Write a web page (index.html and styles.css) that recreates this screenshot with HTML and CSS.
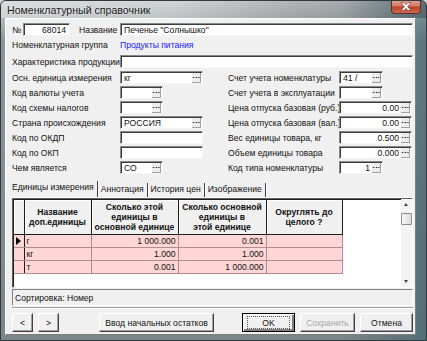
FILE: index.html
```html
<!DOCTYPE html>
<html>
<head>
<meta charset="utf-8">
<link rel="stylesheet" href="styles.css">
</head>
<body>
<div class="window">
  <div class="titlebar">
    <span class="title">Номенклатурный справочник</span>
    <span class="close"><svg width="12" height="9" viewBox="0 0 12 9"><path d="M1 0.5h3l2 2.2 2-2.2h3L7.6 4.5 11 8.5H8L6 6.3 4 8.5H1l3.4-4z" fill="#fff" stroke="#7a2a20" stroke-width="0.6"/></svg></span>
  </div>
  <div class="client">
    <div class="row r1">
      <span class="lbl no">№</span>
      <span class="inp num right">68014</span>
      <span class="lbl name">Название</span>
      <span class="inp grow">Печенье "Солнышко"</span>
    </div>
    <div class="row r2">
      <span class="lbl lw">Номенклатурная группа</span>
      <span class="link">Продукты питания</span>
    </div>
    <div class="row r3">
      <span class="lbl lw">Характеристика продукции</span>
      <span class="inp grow"></span>
    </div>
    <div class="cols">
      <div class="col">
        <div class="row"><span class="lbl lw">Осн. единица измерения</span><span class="inp w83"><span class="val">кг</span><span class="dots"></span></span></div>
        <div class="row"><span class="lbl lw">Код валюты учета</span><span class="inp w43"><span class="val"></span><span class="dots"></span></span></div>
        <div class="row"><span class="lbl lw">Код схемы налогов</span><span class="inp w43"><span class="val"></span><span class="dots"></span></span></div>
        <div class="row"><span class="lbl lw">Страна происхождения</span><span class="inp w83"><span class="val">РОССИЯ</span><span class="dots"></span></span></div>
        <div class="row"><span class="lbl lw">Код по ОКДП</span><span class="inp w83"></span></div>
        <div class="row"><span class="lbl lw">Код по ОКП</span><span class="inp w83"></span></div>
        <div class="row"><span class="lbl lw">Чем является</span><span class="inp w43"><span class="val">СО</span><span class="dots"></span></span></div>
      </div>
      <div class="col">
        <div class="row"><span class="lbl rw">Счет учета номенклатуры</span><span class="inp w44"><span class="val">41 /</span><span class="dots"></span></span></div>
        <div class="row"><span class="lbl rw">Счет учета в эксплуатации</span><span class="inp w44"><span class="val"></span><span class="dots"></span></span></div>
        <div class="row"><span class="lbl rw">Цена отпуска базовая (руб.)</span><span class="inp w73"><span class="val right">0.00</span><span class="dots"></span></span></div>
        <div class="row"><span class="lbl rw">Цена отпуска базовая (вал.)</span><span class="inp w73"><span class="val right">0.00</span><span class="dots"></span></span></div>
        <div class="row"><span class="lbl rw">Вес единицы товара, кг</span><span class="inp w73"><span class="val right">0.500</span><span class="dots"></span></span></div>
        <div class="row"><span class="lbl rw">Объем единицы товара</span><span class="inp w73"><span class="val right">0.000</span><span class="dots"></span></span></div>
        <div class="row"><span class="lbl rw">Код типа номенклатуры</span><span class="inp w44"><span class="val right">1</span><span class="dots"></span></span></div>
      </div>
    </div>
    <div class="tabs">
      <span class="tab active">Единицы измерения</span>
      <span class="tab">Аннотация</span>
      <span class="tab">История цен</span>
      <span class="tab">Изображение</span>
    </div>
    <div class="gridbox">
      <table class="grid">
        <colgroup><col class="c0"><col class="c1"><col class="c2"><col class="c3"><col class="c4"></colgroup>
        <tr class="head">
          <th></th>
          <th>Название<br>доп.единицы</th>
          <th>Сколько этой<br>единицы в<br>основной единице</th>
          <th>Сколько основной<br>единицы в<br>этой единице</th>
          <th>Округлять до<br>целого ?</th>
        </tr>
        <tr><td class="ind"><span class="tri"></span></td><td>г</td><td class="n">1 000.000</td><td class="n">0.001</td><td></td></tr>
        <tr><td class="ind"></td><td>кг</td><td class="n">1.000</td><td class="n">1.000</td><td></td></tr>
        <tr><td class="ind"></td><td>т</td><td class="n">0.001</td><td class="n">1 000.000</td><td></td></tr>
      </table>
      <div class="vscroll">
        <span class="arr up"></span>
        <span class="thumb"></span>
        <span class="track"></span>
        <span class="arr down"></span>
      </div>
    </div>
    <div class="sort">Сортировка: Номер</div>
    <div class="sep"></div>
    <div class="buttons">
      <span class="btn sm">&lt;</span>
      <span class="btn sm">&gt;</span>
      <span class="btn wide">Ввод начальных остатков</span>
      <span class="spacer"></span>
      <span class="btn def"><span class="focus">OK</span></span>
      <span class="btn dis">Сохранить</span>
      <span class="btn">Отмена</span>
    </div>
  </div>
</div>
</body>
</html>
```

FILE: styles.css
```css
html, body {
  margin: 0;
  padding: 0;
  background: #cfd4d6;
}
body {
  font-family: "Liberation Sans", Arial, sans-serif;
  font-size: 8.6px;
  color: #111;
}
.window {
  width: 427px;
  height: 341px;
  box-sizing: border-box;
  border-radius: 6px 6px 0 0;
  border: 1px solid #2f3a3c;
  background:
    linear-gradient(90deg, rgba(255,255,255,0) 0, rgba(255,255,255,0) 80%, rgba(40,90,100,0.5) 100%),
    linear-gradient(180deg, #c9cdd0 0, #b3b7ba 18px, #8d9396 40px, #7d8487 100%);
  display: flex;
  flex-direction: column;
  overflow: hidden;
}
.titlebar {
  height: 17px;
  display: flex;
  align-items: flex-start;
  position: relative;
  background: linear-gradient(100deg, rgba(255,255,255,0.35) 0, rgba(255,255,255,0.15) 40%, rgba(0,0,0,0.12) 70%, rgba(0,0,0,0.25) 100%);
}
.title {
  font-family: "Liberation Sans", Arial, sans-serif;
  font-size: 10.6px;
  color: #1a1a1a;
  margin: 3px 0 0 6px;
  text-shadow: 0 0 3px rgba(255,255,255,0.8);
}
.close {
  position: absolute;
  right: 5px;
  top: -1px;
  width: 30px;
  height: 14px;
  box-sizing: border-box;
  border: 1px solid #5b2f2a;
  border-top: none;
  border-radius: 0 0 4px 4px;
  background: linear-gradient(180deg, #e8a596 0, #d27a66 45%, #b8412b 55%, #cf6a4e 100%);
  display: flex;
  align-items: center;
  justify-content: center;
}
.client {
  flex: 1;
  margin: 0 10px 5px 4px;
  background: #f0f0f0;
  border: 1px solid #a0a0a0;
  border-color: #ffffff #808080 #808080 #ffffff;
  padding: 4px 2px 0 6px;
  display: flex;
  flex-direction: column;
}
.row {
  display: flex;
  align-items: center;
  height: 13px;
}
.lbl {
  white-space: nowrap;
  flex: none;
}
.no { width: 11px; }
.name { margin-left: 9px; width: 41px; }
.lw { width: 108px; }
.rw { width: 111px; }
.inp {
  height: 13px;
  box-sizing: border-box;
  background: #fff;
  border: 1px solid;
  border-color: #8a8a8a #f4f4f4 #f4f4f4 #8a8a8a;
  box-shadow: inset 1px 1px 0 #3c3c3c;
  display: flex;
  align-items: center;
  padding: 0 1px 0 3px;
  white-space: nowrap;
  overflow: hidden;
  flex: none;
}
.inp.right { justify-content: flex-end; padding-right: 3px; }
.grow { flex: 1; }
.num { width: 47px; }
.w83 { width: 83px; }
.w43 { width: 43px; }
.w44 { width: 44px; }
.w73 { width: 73px; }
.val { flex: 1; }
.val.right { text-align: right; padding-right: 2px; }
.dots {
  width: 8px;
  height: 9px;
  flex: none;
  background:
    radial-gradient(circle, #000 0.7px, transparent 0.9px) 0 0 / 2.6px 9px repeat-x,
    #ececec;
  background-position: 0.5px 0;
  border-right: 1px solid #a0a0a0;
  border-bottom: 1px solid #a0a0a0;
}
.link { color: #1a1aff; }
.r2 { margin-top: 2px; height: 13px; }
.r3 { margin-top: 4px; }
.cols {
  display: grid;
  grid-template-columns: 216px 1fr;
  margin-top: 3px;
}
.col {
  display: flex;
  flex-direction: column;
  gap: 2px;
}
.tabs {
  margin-top: 8px;
  height: 16px;
  display: flex;
  align-items: flex-end;
  border-bottom: 1px solid #fff;
  box-sizing: border-box;
}
.tab {
  padding: 0 3px 2px 2px;
  height: 12px;
  border-right: 1px solid #404040;
  box-shadow: 1px 0 0 #fff;
  margin-right: 1px;
  white-space: nowrap;
  line-height: 12px;
}
.tab.active {
  background: #f0f0f0;
  padding-bottom: 3px;
  height: 13px;
  padding-left: 0;
}
.gridbox {
  height: 90px;
  box-sizing: border-box;
  border: 1px solid;
  border-color: #606060 #ffffff #ffffff #606060;
  box-shadow: inset 1px 1px 0 #202020;
  background: #fff;
  display: flex;
  position: relative;
  padding: 1px 0 0 1px;
}
.grid {
  border-collapse: collapse;
  table-layout: fixed;
  width: 328px;
  align-self: flex-start;
}
.c0 { width: 10px; }
.c1 { width: 67px; }
.c2 { width: 87px; }
.c3 { width: 88px; }
.c4 { width: 76px; }
.grid th {
  height: 34px;
  padding: 0;
  font-weight: bold;
  font-size: 8.6px;
  line-height: 10px;
  text-align: center;
  background: #f0f0f0;
  border-right: 1px solid #1c1c1c;
  border-bottom: 1px solid #1c1c1c;
  box-shadow: inset 1px 1px 0 #fff;
}
.grid td {
  height: 12px;
  padding: 0 2px;
  background: #ffd6d6;
  border-right: 1px solid #b28c8c;
  border-bottom: 1px solid #b28c8c;
  white-space: nowrap;
  line-height: 12px;
}
.grid td.n { text-align: right; }
.grid td.ind { padding: 0; position: relative; border-right-color: #1c1c1c; }
.tri {
  display: block;
  width: 0;
  height: 0;
  margin-left: 2px;
  border-left: 5px solid #000;
  border-top: 4px solid transparent;
  border-bottom: 4px solid transparent;
}
.vscroll {
  margin-left: auto;
  width: 11px;
  display: flex;
  flex-direction: column;
  align-items: center;
  background: #f4f4f4;
  margin-top: -1px;
}
.arr { width: 11px; height: 11px; position: relative; }
.arr::after {
  content: "";
  position: absolute;
  left: 3px;
  width: 0; height: 0;
  border-left: 2.5px solid transparent;
  border-right: 2.5px solid transparent;
}
.up::after { top: 4px; border-bottom: 3px solid #444; }
.down::after { top: 4px; border-top: 3px solid #444; }
.thumb {
  width: 9px;
  height: 10px;
  margin-top: 3px;
  border: 1px solid #8c8c8c;
  border-radius: 1px;
  background: linear-gradient(90deg, #f6f6f6, #dcdcdc);
}
.track { flex: 1; }
.sort {
  margin-top: 1px;
  height: 17px;
  box-sizing: border-box;
  border: 1px solid;
  border-color: #808080 #ffffff #ffffff #808080;
  display: flex;
  align-items: center;
  padding-left: 2px;
}
.sep {
  margin-top: 1px;
  height: 0;
  border-top: 1px solid #a0a0a0;
  border-bottom: 1px solid #fff;
}
.buttons {
  margin-top: 4px;
  display: flex;
  height: 19px;
}
.btn {
  height: 19px;
  box-sizing: border-box;
  border: 1px solid;
  border-color: #fff #404040 #404040 #fff;
  box-shadow: inset -1px -1px 0 #a0a0a0;
  background: #f0f0f0;
  display: flex;
  align-items: center;
  justify-content: center;
  white-space: nowrap;
  flex: none;
}
.sm { width: 21px; margin-right: 5px; }
.wide { width: 115px; margin-left: 35px; }
.spacer { flex: 1; }
.def {
  width: 53px;
  border: 1px solid #000;
  box-shadow: inset 1px 1px 0 #fff, inset -2px -2px 0 #808080;
  margin-right: 5px;
}
.focus {
  border: 1px dotted #555;
  width: 41px;
  height: 11px;
  display: flex;
  align-items: center;
  justify-content: center;
}
.dis { width: 55px; color: #a8a8a8; margin-right: 5px; }
.btn:last-child { width: 53px; }
```
